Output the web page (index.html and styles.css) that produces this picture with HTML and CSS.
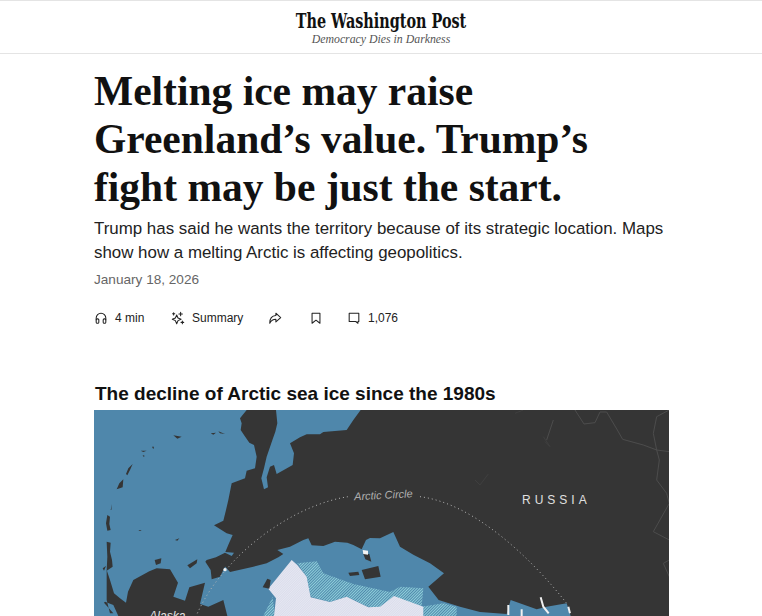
FILE: index.html
```html
<!DOCTYPE html>
<html lang="en">
<head>
<meta charset="utf-8">
<title>Melting ice may raise Greenland's value</title>
<link rel="stylesheet" href="styles.css">
</head>
<body>
<header class="masthead">
  <div class="logo">The Washington Post</div>
  <div class="tagline">Democracy Dies in Darkness</div>
</header>
<main class="article">
  <h1 class="headline">Melting ice may raise Greenland’s value. Trump’s fight may be just the start.</h1>
  <p class="dek">Trump has said he wants the territory because of its strategic location. Maps show how a melting Arctic is affecting geopolitics.</p>
  <p class="date">January 18, 2026</p>
  <ul class="actions">
    <li class="action action-listen">
      <svg class="icon" viewBox="0 0 16 16"><path d="M2.500 10V8a5.500 5.500 0 0 1 11 0v2"/><rect x="2.500" y="9" width="3" height="5" rx="1.200"/><rect x="10.500" y="9" width="3" height="5" rx="1.200"/></svg>
      <span>4 min</span>
    </li>
    <li class="action action-summary">
      <svg class="icon" viewBox="0 0 16 16"><path d="M6.500 4.500 8 8l3.500 1.500L8 11l-1.500 3.500L5 11 1.500 9.500 5 8z"/><path d="M11 1.500v4M9 3.500h4M13 11.500v3M11.500 13h3M3 2v2.500M1.800 3.200h2.500"/></svg>
      <span>Summary</span>
    </li>
    <li class="action action-share">
      <svg class="icon" viewBox="0 0 16 16"><path d="M9 2.500 14.500 7.500 9 12.500V9.500C5.500 9.500 3.500 11 2 14c0-5 2.500-8.500 7-8.800z"/></svg>
    </li>
    <li class="action action-save">
      <svg class="icon" viewBox="0 0 16 16"><path d="M3.500 2.500h9v11.500L8 10.500 3.500 14z"/></svg>
    </li>
    <li class="action action-comment">
      <svg class="icon" viewBox="0 0 16 16"><path d="M2.500 2.500h11v9.500H12.500V14L10 12H2.500z"/></svg>
      <span>1,076</span>
    </li>
  </ul>
  <h2 class="map-title">The decline of Arctic sea ice since the 1980s</h2>
  <figure class="map">
    <svg class="map-svg" viewBox="0 0 575 206" role="img" aria-label="Map of Arctic sea ice">
      <defs>
        <pattern id="hatch-teal" width="6" height="6" patternUnits="userSpaceOnUse" patternTransform="rotate(45)">
          <rect width="6" height="6" fill="#4f87ab"/>
          <rect width="3" height="6" fill="#8fd0da"/>
        </pattern>
        <pattern id="hatch-ice" width="5" height="5" patternUnits="userSpaceOnUse" patternTransform="rotate(45)">
          <rect width="5" height="5" fill="#e6e7f2"/>
          <rect width="1.500" height="5" fill="#d3d7e7"/>
        </pattern>
      </defs>
      <rect width="575" height="206" fill="#4f87ab"/>
      <g transform="translate(-4 -10) scale(.33333)">
        <path class="land" d="M470 30H558L562 70 556 95 548 118 530 170 522 205 514 235 522 268 534 262 530 232 540 200 552 195 560 222 608 195 612 160 600 130 630 112 650 103 690 103 700 96 770 90 790 60 812 30H1740V648H1442L1430 610 1370 620 1340 628 1262 600 1250 642 1170 636 1110 620 1046 600 1015 560 1062 520 1020 490 970 464 930 440 910 396 870 415 840 414 828 420 815 448 790 435 772 428 735 425 700 438 665 436 655 415 640 420 600 440 562 450 580 462 565 472 530 490 490 500 420 516 404 498 432 458 406 456 416 432 428 405 410 400 372 376 400 362 408 330 415 300 425 250 465 235 470 212 495 205 500 170 492 135 478 128 462 105 452 90 455 70 450 55 470 30Z"/>
        <path class="land" d="M350 480 378 472 405 458 430 470 405 500 390 530 365 538 362 510 346 485Z"/>
        <path class="land" d="M50 510 60 540 72 580 90 595 108 608 114 575 130 540 178 514 200 505 240 508 264 548 250 590 285 602 298 562 345 548 330 612 355 620 400 600 412 648H85L70 615 45 605 42 608 70 640H60L50 600Z"/>
        <path class="land" d="M194 480 214 475 212 490 198 495Z"/>
        <path class="land" d="M292 496 322 478 320 490 300 505Z"/>
        <path class="land" d="M52 345 60 350 58 372 62 390 52 392 48 370ZM50 425 62 428 60 455 66 480 68 500 50 512 52 470Z"/>
        <path class="land" d="M88 250 100 238 98 262 80 268ZM108 222 115 205 128 192 120 210 112 226ZM62 330 66 312 64 330ZM38 505 48 498 42 512Z"/>
        <path class="land" d="M385 94 405 102 390 100ZM362 100 378 98 370 104ZM250 106 275 110 262 116ZM152 152 170 152 160 156ZM186 140 192 140 190 148ZM255 420 268 415 262 422ZM145 390 155 390 150 393ZM158 165 165 168 160 170Z"/>
        <path class="land" d="M775 518 805 515 808 525 780 528ZM815 510 865 498 872 530 825 538ZM820 462 838 462 844 485 826 478Z"/>
        <path class="hatch" d="M520 648 548 590 555 648ZM622 490 680 484 700 520 790 552 900 576 930 560 1000 565 995 620 1060 610 1100 620 1100 648H1000L1000 625 912 590 860 628 835 620 770 590 720 605 662 590 650 530Z"/>
        <path class="ice" d="M535 566 605 480 622 495 650 530 662 592 720 606 770 590 835 622 870 620 912 588 1000 620V648H552L558 595Z"/>
        <path class="land" d="M518 562 532 536 542 540 538 566Z"/>
        <path class="white" d="M818 450 834 452 834 464 820 462Z"/>
        <circle class="white" cx="405" cy="509" r="5"/>
        <path class="white-line" d="M1255 615V645M1295 628V648M1352 592 1360 620 1376 640M1435 620 1440 640"/>
        <path class="dots" d="M322 640C345 590 375 545 408 510 490 410 640 310 775 290M990 290C1150 310 1320 470 1430 610"/>
        <path class="border" d="M1455 30 1482 72 1515 68 1530 36 1550 36 1582 90 1598 118 1660 135 1700 150 1738 155M1700 150 1708 180 1700 240 1730 280 1738 310 1690 395 1738 420M1370 120 1390 60M1738 30 1700 50 1690 100 1700 150M1738 480 1720 490 1738 530"/>
        <path class="border faint" d="M1155 240 1170 255 1195 222M1360 110 1380 140 1365 125M1275 40 1300 30"/>
        <text class="map-label label-alaska" x="178" y="660">Alaska</text>
        <text class="map-label label-circle" x="793" y="301" transform="rotate(-3 793 301)">Arctic Circle</text>
      </g>
      <text class="russia" x="428" y="94">RUSSIA</text>
    </svg>
  </figure>
</main>
</body>
</html>
```
FILE: styles.css
```css
html, body {
  margin: 0;
  padding: 0;
  background: #fff;
}
body {
  height: 616px;
  overflow: hidden;
  color: #111;
  font-family: "Liberation Sans", Arial, sans-serif;
}
.masthead {
  height: 52px;
  border-top: 1px solid #e4e4e4;
  border-bottom: 1px solid #e4e4e4;
  display: flex;
  flex-direction: column;
  align-items: center;
}
.logo {
  margin-top: 8px;
  font-family: "DejaVu Serif Condensed", "DejaVu Serif", serif;
  font-stretch: condensed;
  font-weight: 700;
  font-size: 16px;
  line-height: 24px;
  color: #111;
  white-space: nowrap;
  transform: scaleY(1.3);
}
.tagline {
  font-family: "Liberation Serif", serif;
  font-style: italic;
  font-size: 11.800px;
  line-height: 13px;
  color: #555;
}
.article {
  padding: 13px 0 0 94px;
}
.headline {
  margin: 0;
  width: 560px;
  font-family: "Liberation Serif", serif;
  font-weight: 700;
  font-size: 41.500px;
  line-height: 48px;
  color: #111;
}
.dek {
  margin: 6px 0 0;
  width: 590px;
  font-size: 16.900px;
  line-height: 24px;
  color: #222;
}
.date {
  margin: 5px 0 0;
  font-size: 13.600px;
  line-height: 20px;
  color: #666;
}
.actions {
  list-style: none;
  display: flex;
  align-items: center;
  margin: 18px 0 0;
  padding: 0;
  height: 20px;
  font-size: 12px;
  color: #222;
}
.action {
  display: flex;
  align-items: center;
}
.action span {
  white-space: nowrap;
}
.icon {
  display: block;
  width: 14px;
  height: 14px;
  fill: none;
  stroke: #222;
  stroke-width: 1.200;
  stroke-linejoin: round;
  stroke-linecap: round;
}
.action-listen { width: 77px; gap: 7px; }
.action-summary { width: 97px; gap: 7px; }
.action-share { width: 41px; }
.action-save { width: 38px; }
.action-comment { gap: 7px; }
.map-title {
  margin: 54px 0 0 1px;
  font-size: 19px;
  line-height: 24px;
  font-weight: 700;
  color: #111;
  white-space: nowrap;
}
.map {
  margin: 4px 0 0;
  width: 575px;
  height: 206px;
}
.map-svg {
  display: block;
  width: 575px;
  height: 206px;
}
.land { fill: #353535; }
.hatch { fill: url(#hatch-teal); }
.ice { fill: url(#hatch-ice); }
.white { fill: #f4f4f4; }
.white-line {
  fill: none;
  stroke: #f0f0f0;
  stroke-width: 6;
}
.dots {
  fill: none;
  stroke: #b5b5b5;
  stroke-width: 3;
  stroke-dasharray: 3 9;
}
.border {
  fill: none;
  stroke: #4c4c4c;
  stroke-width: 3;
}
.border.faint { stroke: #3f3f3f; }
.map-label {
  font-family: "Liberation Sans", Arial, sans-serif;
  font-style: italic;
  font-size: 33px;
  fill: #b0b0b0;
}
.label-alaska { font-size: 36px; fill: #e6e6e6; }
.russia {
  font-family: "Liberation Sans", Arial, sans-serif;
  font-size: 12px;
  letter-spacing: 4px;
  fill: #e0e0e0;
}
```
